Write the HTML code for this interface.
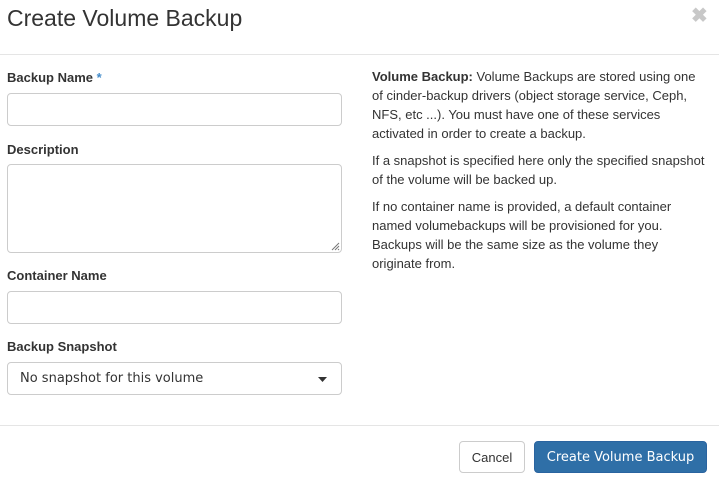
<!DOCTYPE html>
<html><head><style>
*{box-sizing:border-box;margin:0;padding:0}
body{width:719px;height:482px;background:#fff;font-family:"Liberation Sans",sans-serif;color:#333;position:relative;overflow:hidden}
.a{position:absolute}
h4{position:absolute;left:7px;top:5px;font-size:23px;font-weight:normal;color:#333}
.x{position:absolute;left:691px;top:3px;font-size:20px;font-weight:bold;color:#c8c8c8}
.hr{position:absolute;left:0;width:719px;height:1px;background:#e5e5e5}
label{position:absolute;left:7px;font-size:13px;font-weight:bold;color:#333}
.in{position:absolute;left:7px;width:335px;border:1px solid #ccc;border-radius:4px;background:#fff}
.help{position:absolute;left:372px;top:67px;width:334px;font-size:13px;line-height:19px;color:#333}
.help p{margin-bottom:8px}
.btn{position:absolute;top:441px;height:32px;border-radius:4px;font-size:13px;line-height:32px;text-align:center}
</style></head><body>
<h4>Create Volume Backup</h4>
<div class="x">✖</div>
<div class="hr" style="top:54px"></div>
<label style="top:70px">Backup Name <span style="color:#428bca">*</span></label>
<div class="in" style="top:93px;height:33px"></div>
<label style="top:142px">Description</label>
<div class="in" style="top:164px;height:89px"><svg class="a" style="right:1px;bottom:1px" width="9" height="9"><path d="M8 1L1 8M8 4L4 8M8 7L7 8" stroke="#777" stroke-width="1"/></svg></div>
<label style="top:268px">Container Name</label>
<div class="in" style="top:291px;height:33px"></div>
<label style="top:339px">Backup Snapshot</label>
<div class="in" style="top:362px;height:33px;font-family:'DejaVu Sans',sans-serif;font-size:13px;line-height:31px;padding-left:12px;color:#333">No snapshot for this volume<svg class="a" style="left:310px;top:14px" width="9" height="5"><path d="M0 0H9L4.5 5Z" fill="#333"/></svg></div>
<div class="help">
<p><b>Volume Backup:</b> Volume Backups are stored using one of cinder-backup drivers (object storage service, Ceph, NFS, etc ...). You must have one of these services activated in order to create a backup.</p>
<p>If a snapshot is specified here only the specified snapshot of the volume will be backed up.</p>
<p>If no container name is provided, a default container named volumebackups will be provisioned for you. Backups will be the same size as the volume they originate from.</p>
</div>
<div class="hr" style="top:425px"></div>
<div class="btn" style="left:459px;width:66px;border:1px solid #ccc;color:#333">Cancel</div>
<div class="btn" style="left:534px;width:173px;background:#2f6fa7;border:1px solid #2a64a0;color:#fff;font-family:'DejaVu Sans',sans-serif">Create Volume Backup</div>
</body></html>
